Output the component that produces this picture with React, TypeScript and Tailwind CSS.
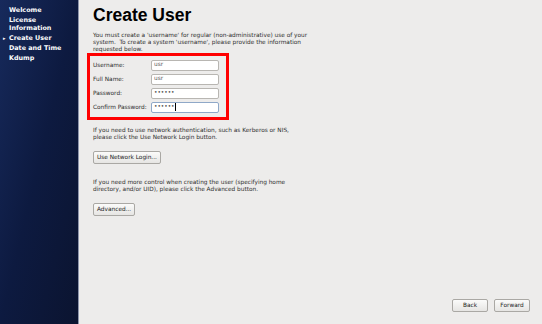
import { ReactNode } from 'react'

const steps = [
  { label: 'Welcome' },
  { label: 'License\nInformation' },
  { label: 'Create User', current: true },
  { label: 'Date and Time' },
  { label: 'Kdump' },
]

function Field({ label, value, focused }: { label: string; value: string; focused?: boolean }) {
  return (
    <div className="flex items-center h-[14px]">
      <span className="w-[58px] shrink-0 whitespace-nowrap">{label}</span>
      <div
        className={
          'w-[68px] h-[11px] bg-white rounded-[2px] border flex items-center px-[2px] ' +
          (focused ? 'border-[#8fa8c8]' : 'border-[#b8b6b2]')
        }
      >
        <span className="text-[#555] leading-none">{value}</span>
        {focused && <span className="w-px h-[8px] bg-black" />}
      </div>
    </div>
  )
}

function Btn({ children, className = '' }: { children: ReactNode; className?: string }) {
  return (
    <div
      className={
        'h-[13px] px-[3px] flex items-center justify-center border border-[#aaa8a4] rounded-[2px] bg-gradient-to-b from-[#fbfbfa] to-[#e6e5e3] text-[#222] ' +
        className
      }
    >
      {children}
    </div>
  )
}

export default function App() {
  return (
    <div
      className="w-[542px] h-[324px] flex bg-[#edeceb] overflow-hidden text-[5.8px] leading-[7px] text-[#2e2e2e]"
      style={{ fontFamily: '"DejaVu Sans", sans-serif' }}
    >
      <div className="w-[79px] shrink-0 bg-gradient-to-br from-[#172a5c] via-[#0d1a40] to-[#0b1430] border-r border-[#8d95ab] pt-[6px]">
        {steps.map((s) => (
          <div key={s.label} className="flex text-white font-bold text-[6.4px] leading-[8px] mb-[2px]">
            <span className="w-[9px] pl-[3px] text-[5px]">{s.current ? '▸' : ''}</span>
            <span className="whitespace-pre-line">{s.label}</span>
          </div>
        ))}
      </div>

      <div className="flex-1 flex flex-col pl-[14px] pr-[12px]">
        <h1
          className="font-bold text-[17.5px] leading-[20px] mt-[5px] text-black"
          style={{ fontFamily: '"Liberation Sans", Arial, sans-serif' }}
        >
          Create User
        </h1>
        <p className="mt-[7px] whitespace-nowrap">
          You must create a 'username' for regular (non-administrative) use of your
          <br />
          system.&nbsp; To create a system 'username', please provide the information
          <br />
          requested below.
        </p>

        <div className="-ml-[6px] w-[142px] h-[67px] border-[3px] border-[#ff0000] pl-[3px] pt-[2px]">
          <Field label="Username:" value="usr" />
          <Field label="Full Name:" value="usr" />
          <Field label="Password:" value="••••••" />
          <Field label="Confirm Password:" value="••••••" focused />
        </div>

        <p className="mt-[7px] whitespace-nowrap">
          If you need to use network authentication, such as Kerberos or NIS,
          <br />
          please click the Use Network Login button.
        </p>
        <div className="flex mt-[10px]">
          <Btn>Use Network Login...</Btn>
        </div>

        <p className="mt-[15px] whitespace-nowrap">
          If you need more control when creating the user (specifying home
          <br />
          directory, and/or UID), please click the Advanced button.
        </p>
        <div className="flex mt-[10px]">
          <Btn>Advanced...</Btn>
        </div>

        <div className="flex-1" />
        <div className="flex justify-end gap-[6px] mb-[12px]">
          <Btn className="w-[36px]">Back</Btn>
          <Btn className="w-[36px]">Forward</Btn>
        </div>
      </div>
    </div>
  )
}
